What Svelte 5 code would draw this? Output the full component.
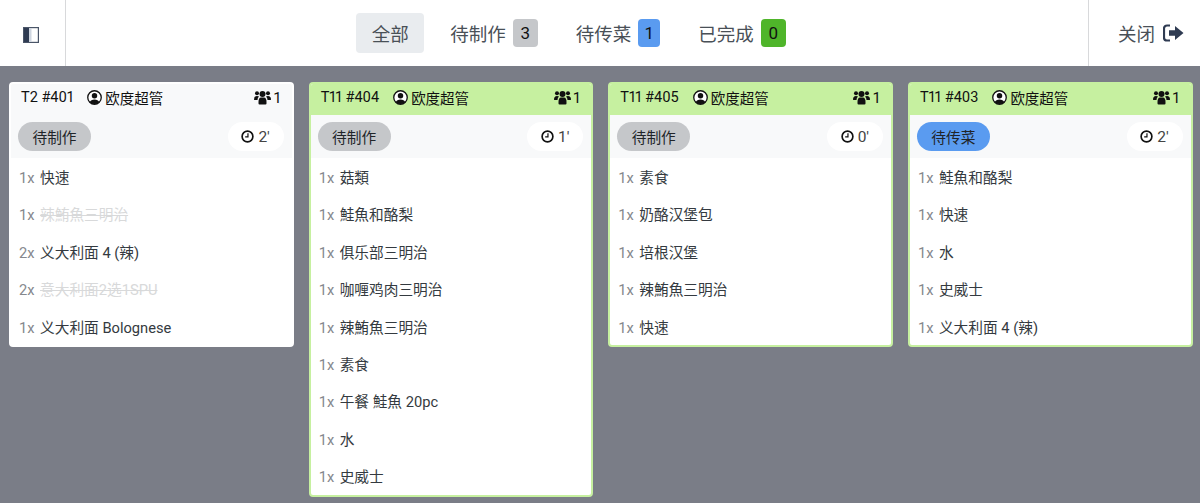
<script>
  const tabs = [
    { label: '全部', active: true },
    { label: '待制作', count: 3, cls: 'grey' },
    { label: '待传菜', count: 1, cls: 'blue' },
    { label: '已完成', count: 0, cls: 'green' }
  ];
  const cards = [
    { table: 'T2 #401', green: false, status: '待制作', cls: 'grey', time: "2'", items: [
      ['1x', '快速'], ['1x', '辣鮪魚三明治', true], ['2x', '义大利面 4 (辣)'], ['2x', '意大利面2选1SPU', true], ['1x', '义大利面 Bolognese'] ] },
    { table: 'T11 #404', green: true, status: '待制作', cls: 'grey', time: "1'", items: [
      ['1x', '菇類'], ['1x', '鮭魚和酪梨'], ['1x', '俱乐部三明治'], ['1x', '咖喱鸡肉三明治'], ['1x', '辣鮪魚三明治'], ['1x', '素食'], ['1x', '午餐 鮭魚 20pc'], ['1x', '水'], ['1x', '史威士'] ] },
    { table: 'T11 #405', green: true, status: '待制作', cls: 'grey', time: "0'", items: [
      ['1x', '素食'], ['1x', '奶酪汉堡包'], ['1x', '培根汉堡'], ['1x', '辣鮪魚三明治'], ['1x', '快速'] ] },
    { table: 'T11 #403', green: true, status: '待传菜', cls: 'blue', time: "2'", items: [
      ['1x', '鮭魚和酪梨'], ['1x', '快速'], ['1x', '水'], ['1x', '史威士'], ['1x', '义大利面 4 (辣)'] ] }
  ];
</script>

<div class="page">
  <nav class="bar">
    <div class="side">
      <svg width="16" height="16" viewBox="0 0 16 16"><rect x="0.6" y="0.6" width="14.8" height="14.8" fill="#fff" stroke="#4a5568" stroke-width="1.2"/><rect x="1" y="1" width="5" height="14" fill="#2f3b52"/><rect x="6" y="1" width="2.500" height="14" fill="#cfd6e0"/></svg>
    </div>
    <div class="tabs">
      {#each tabs as t}
        <div class="tab" class:active={t.active}>
          <span>{t.label}</span>
          {#if t.count !== undefined}<span class="badge {t.cls}" class:narrow={t.count === 1}>{t.count}</span>{/if}
        </div>
      {/each}
    </div>
    <div class="close">
      <span>关闭</span>
      <svg width="21" height="18" viewBox="0 0 21 18"><path d="M7 1.500H4A3 3 0 0 0 1 4.500v9a3 3 0 0 0 3 3h3" fill="none" stroke="#2f3b52" stroke-width="2.200"/><path d="M6 6.300h6V2l8.500 7-8.500 7v-4.300H6z" fill="#2f3b52"/></svg>
    </div>
  </nav>
  <main class="grid">
    {#each cards as c}
      <section class="card" class:lime={c.green}>
        <header class="head">
          <span class="tbl">{c.table}</span>
          <span class="user">
            <svg width="15" height="15" viewBox="0 0 16 16"><circle cx="8" cy="8" r="7.200" fill="#fff" stroke="#111" stroke-width="1.400"/><circle cx="8" cy="6.200" r="2.900" fill="#111"/><path d="M2.900 13a5.400 4.400 0 0 1 10.200 0A7 7 0 0 1 8 15a7 7 0 0 1-5.100-2z" fill="#111"/></svg>
            欧度超管
          </span>
          <span class="people">
            <svg width="17" height="15" viewBox="0 0 17 15"><circle cx="3" cy="3.200" r="2" fill="#111"/><circle cx="14" cy="3.200" r="2" fill="#111"/><circle cx="8.500" cy="4" r="3" fill="#111"/><path d="M0 9.500Q0 6 3 6q1.500 0 2 .6Q3.500 8 3.500 10H1q-1 0-1-.5zM17 9.500Q17 6 14 6q-1.500 0-2 .6 1.500 1.400 1.500 3.400H16q1 0 1-.5z" fill="#111"/><path d="M4.500 12q0-4.500 2.500-4.500h3q2.500 0 2.500 4.500v1.500q0 1-1 1h-6q-1 0-1-1z" fill="#111"/></svg>
            1
          </span>
        </header>
        <div class="sub">
          <span class="status {c.cls}">{c.status}</span>
          <span class="time">
            <svg width="13" height="13" viewBox="0 0 14 14"><circle cx="7" cy="7" r="5.800" fill="none" stroke="#111" stroke-width="1.800"/><path d="M7.500 3.500v4H4.500" fill="none" stroke="#111" stroke-width="1.300"/></svg>
            {c.time}
          </span>
        </div>
        <ul class="items">
          {#each c.items as it}
            <li><span class="qty">{it[0]}</span><span class="name" class:done={it[2]}>{it[1]}</span></li>
          {/each}
        </ul>
      </section>
    {/each}
  </main>
</div>

<style>
  :global(body) { margin: 0; overflow: hidden; }
  .page {
    width: 1200px; height: 503px; background: #7a7d87;
    font-family: Roboto, "Noto Sans CJK SC", sans-serif;
    font-size: 14.700px; color: #212529; overflow: hidden;
  }
  .bar { height: 66px; background: #fff; display: flex; align-items: stretch; }
  .side { width: 61px; padding-right: 4px; padding-top: 3px; border-right: 1px solid #d8d9db; display: flex; align-items: center; justify-content: center; }
  .tabs { flex: 1; display: flex; align-items: center; justify-content: center; padding-left: 4px; color: #495057; font-size: 18.500px; }
  .tab { display: flex; align-items: center; gap: 7px; height: 40px; padding: 0 16px; border-radius: 4px; margin-right: 6px; }
  .tab:last-child { margin-right: 0; }
  .tab.active { background: #e9ecef; margin-right: 10px; padding: 0 15.500px; }
  .badge { box-sizing: border-box; width: 25px; height: 28px; border-radius: 4px; display: flex; align-items: center; justify-content: center; color: #111; font-size: 17px; }
  .badge.narrow { width: 22px; }
  .grey { background: #c5c7ca; }
  .blue { background: #5a9bf0; }
  .green { background: #4fb52a; }
  .close { width: 112px; box-sizing: border-box; padding-left: 29px; border-left: 1px solid #d8d9db; display: flex; align-items: center; gap: 8px; color: #495057; font-size: 18.500px; }
  .grid { display: grid; grid-template-columns: repeat(4, 1fr); gap: 15px; padding: 16px 7.500px 0 9px; align-items: start; }
  .card { background: #fff; border-radius: 4px; border: 2px solid #fff; overflow: hidden; }
  .card.lime { border-color: #c6f0a0; }
  .head { box-sizing: border-box; height: 31px; padding: 0 10px 4px; background: #f8f9fa; display: flex; align-items: center; font-size: 14.500px; color: #111; }
  .card.lime .head { background: #c6f0a0; }
  .tbl { margin-right: 14px; font-variant-numeric: proportional-nums; }
  .user { display: flex; align-items: center; gap: 3px; flex: 1; }
  .people { display: flex; align-items: center; gap: 2px; font-size: 15px; }
  .sub { height: 43px; background: #f8f9fa; display: flex; align-items: center; justify-content: space-between; padding: 0 8px 0 7px; }
  .status { height: 29px; width: 73px; border-radius: 15px; display: flex; align-items: center; justify-content: center; color: #212529; }
  .time { height: 29px; width: 56px; border-radius: 15px; background: #fff; display: flex; align-items: center; justify-content: center; gap: 4px; color: #444; font-size: 15.500px; }
  .items { list-style: none; margin: 0; padding: 0; }
  li { box-sizing: border-box; height: 37.400px; padding: 3px 0 0 8px; line-height: 34.400px; display: flex; align-items: baseline; }
  .qty { width: 21px; color: #85888d; }
  .name { color: #343a40; }
  .done { color: #d8d9da; text-decoration: line-through; }
</style>
